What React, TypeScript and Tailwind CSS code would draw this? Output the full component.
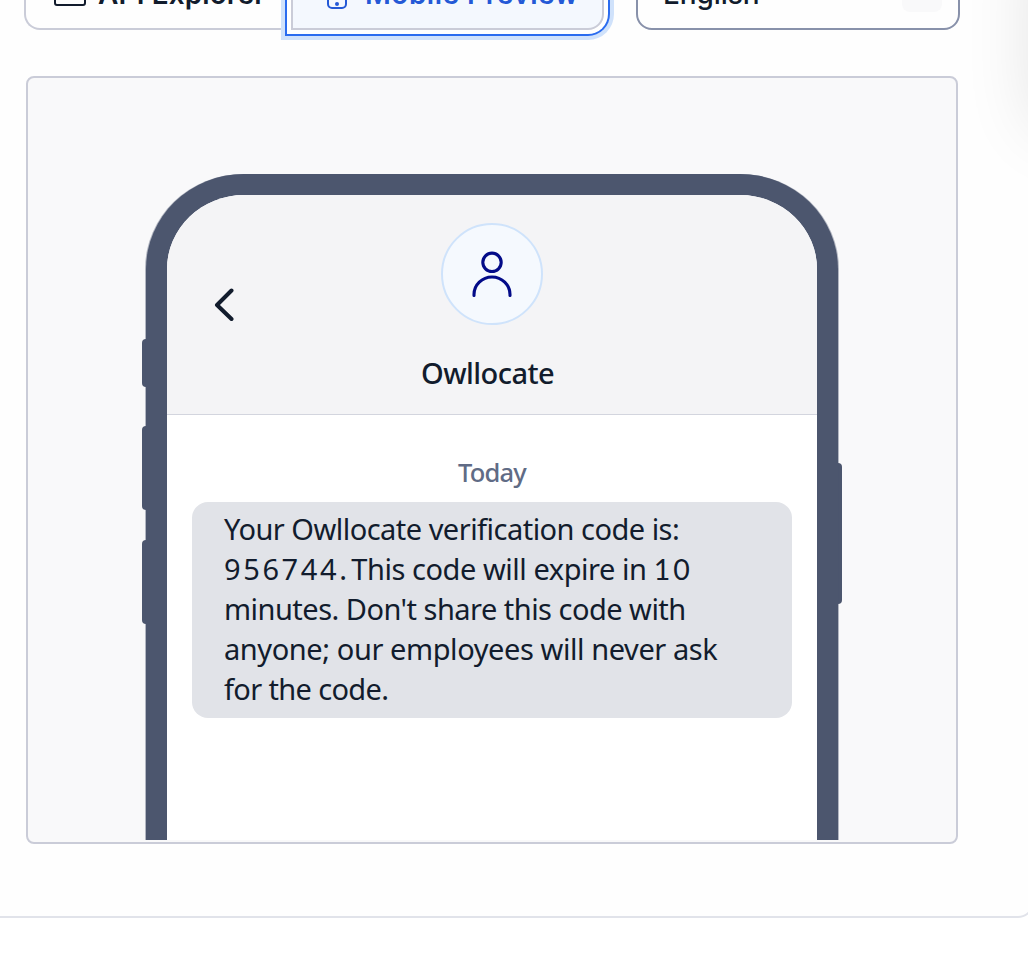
function ApiIcon() {
  return (
    <svg className="mt-[5px] h-8 w-8 shrink-0" viewBox="0 0 32 32" fill="none" stroke="#121c2d" strokeWidth="2">
      <rect x="1" y="3" width="30" height="25" rx="2" />
    </svg>
  );
}

function PhoneIcon() {
  return (
    <svg className="h-8 w-5 shrink-0" viewBox="0 0 20 32" fill="none" stroke="#2459d6" strokeWidth="2">
      <rect x="1" y="1" width="18" height="30" rx="4" />
      <circle cx="10" cy="27" r="2" fill="#2459d6" stroke="none" />
    </svg>
  );
}

function Toolbar() {
  return (
    <div className="-mt-[50px] ml-6 flex h-20 text-[28px] leading-9 text-[#121c2d]">
      <button className="flex w-[267px] shrink-0 items-center rounded-l-2xl border-2 border-r-0 border-[#caccd8] pl-7 font-semibold">
        <ApiIcon />
        <span className="mt-2 ml-3 whitespace-nowrap tracking-[0.1px]">API Explorer</span>
      </button>
      <button className="relative flex w-[313px] shrink-0 items-center rounded-r-2xl border-2 border-[#caccd8] bg-[#f4f8fe] pl-[34px] font-semibold text-[#2459d6] shadow-[0_0_0_4px_#fff,0_0_0_6px_#2b6cef,0_0_0_10px_#d0e2fb]">
        <span className="mt-[5px]"><PhoneIcon /></span>
        <span className="mt-2 ml-[18px] whitespace-nowrap tracking-[0.5px]">Mobile Preview</span>
      </button>
      <button className="ml-8 flex w-[324px] shrink-0 items-center justify-between rounded-2xl border-2 border-[#8891aa] pr-4 pl-[25px] font-medium">
        <span className="mt-2 tracking-[-0.1px]">English</span>
        <span className="mt-1 h-10 w-10 rounded-lg bg-[#f9f9fa]" />
      </button>
    </div>
  );
}

function Phone() {
  return (
    <div className="relative ml-[118px] h-[666px] w-[692px] shrink-0">
      <span className="absolute top-[165px] -left-1 h-12 w-3 rounded-[4px] bg-[#4c566e]" />
      <span className="absolute top-[252px] -left-1 h-[84px] w-3 rounded-[4px] bg-[#4c566e]" />
      <span className="absolute top-[366px] -left-1 h-[84px] w-3 rounded-[4px] bg-[#4c566e]" />
      <span className="absolute top-[289px] -right-1 h-[141px] w-3 rounded-[4px] bg-[#4c566e]" />
      <div className="relative flex h-full flex-col overflow-hidden rounded-t-[98px_95px] border-[21px] border-b-0 border-[#4c566e] bg-white shadow-[-1px_0_0_rgba(76,86,110,0.4),1px_0_0_rgba(76,86,110,0.4)]">
        <div className="flex h-[220px] shrink-0 flex-col border-b border-[#d3d5de] bg-[#f4f4f6] pt-7">
          <div className="flex w-full items-start">
            <svg className="mt-[65px] ml-[47px] h-[34px] w-[20px] shrink-0" viewBox="0 0 20 34" fill="none" stroke="#121c2d" strokeWidth="4" strokeLinecap="round" strokeLinejoin="round">
              <path d="M17.500 2.500 3 17l14.500 14" />
            </svg>
            <div className="ml-[207px] flex h-[102px] w-[102px] items-center justify-center rounded-full border-2 border-[#cfe3fb] bg-[#f5f9fe]">
              <svg className="h-[46px] w-10" viewBox="0 0 40 46" fill="none" stroke="#030b88" strokeWidth="3.100" strokeLinecap="round">
                <circle cx="20" cy="11.300" r="9.200" />
                <path d="M2 44.500V43.500A18 17.500 0 0 1 38 43.500V44.500" />
              </svg>
            </div>
          </div>
          <h2 className="mt-7 ml-[254px] text-[29px] leading-10 font-medium tracking-[-0.55px] whitespace-nowrap text-[#121c2d]">Owllocate</h2>
        </div>
        <p className="mt-[37px] text-center text-[25.500px] leading-10 font-medium tracking-[-0.8px] text-[#606b85]">Today</p>
        <div className="mt-2.5 ml-[25px] h-[216px] w-[600px] shrink-0 rounded-2xl bg-[#e1e3e8] px-8 pt-[7px] text-[29px] leading-10 whitespace-nowrap text-[#121c2d]">
          <p className="tracking-[-0.52px]">Your Owllocate verification code is:</p>
          <p className="h-10 tracking-[-0.45px]">
            <span className="tracking-[2.600px]">956744</span>
            <span className="tracking-[-1.600px]">. </span>
            <span>This code will expire in </span>
            <span className="font-[Lato,sans-serif] text-[28.500px] tracking-[3px]">10</span>
          </p>
          <p className="tracking-[-0.52px]">minutes. Don't share this code with</p>
          <p className="tracking-[-0.42px]">anyone; our employees will never ask</p>
          <p className="tracking-[-0.65px]">for the code.</p>
        </div>
      </div>
    </div>
  );
}

export default function App() {
  return (
    <div className="relative h-[970px] w-[1028px] overflow-hidden bg-white font-[Inter,sans-serif]">
      <div className="h-[918px] w-[1034px] rounded-br-2xl border-r-2 border-b-2 border-[#e1e3ea] bg-[#fefefe]">
        <div className="flex flex-col">
          <Toolbar />
          <section className="mt-[46px] ml-[26px] flex h-[768px] w-[932px] flex-col overflow-hidden rounded-lg border-2 border-[#caccd8] bg-[#f9f9fa] pt-24 font-[Noto_Sans,sans-serif]">
            <Phone />
          </section>
        </div>
      </div>
      <div className="absolute -top-20 left-[1036px] h-48 w-40 rounded-2xl shadow-[0_16px_72px_rgba(0,0,0,0.12)]" />
    </div>
  );
}
